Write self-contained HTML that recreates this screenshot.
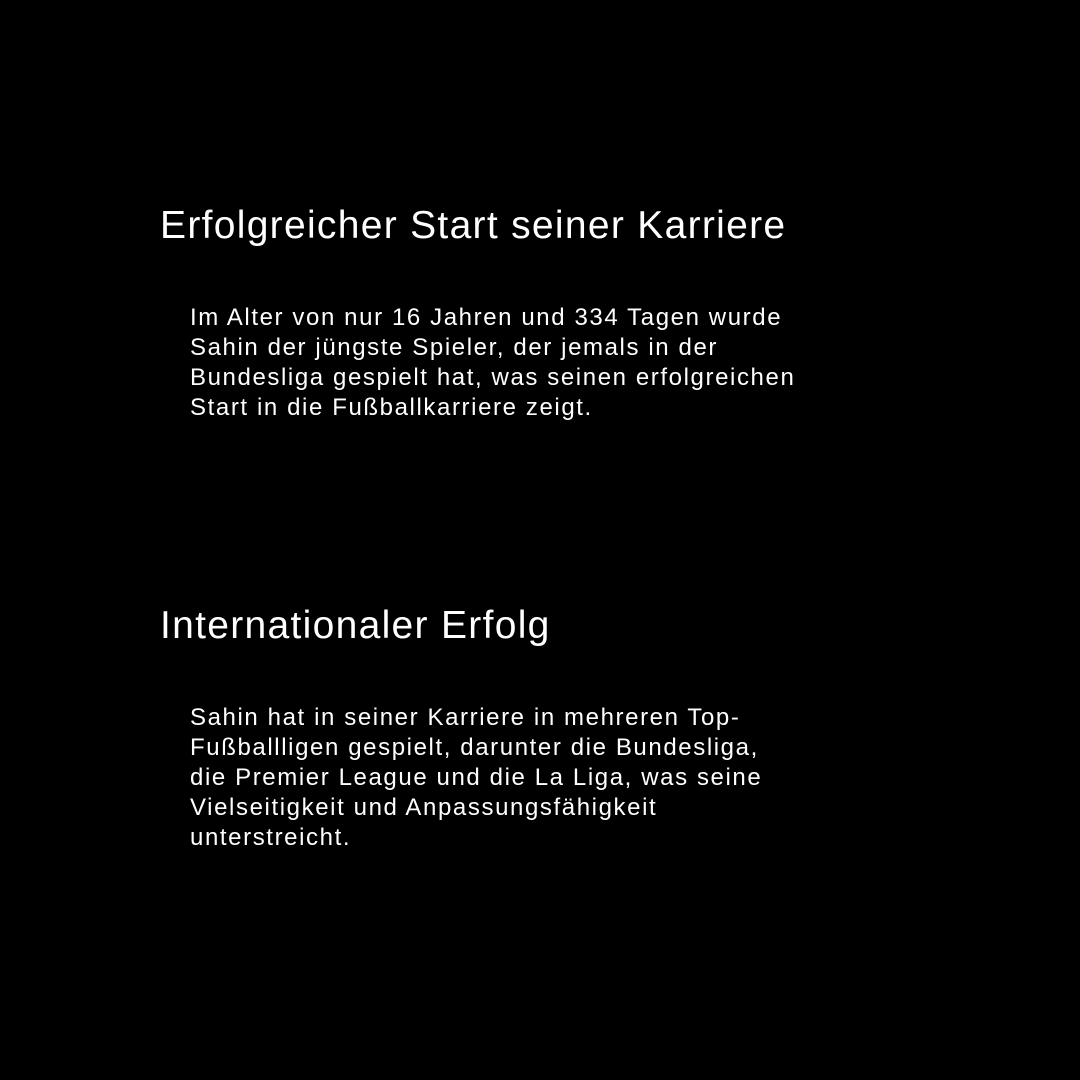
<!DOCTYPE html>
<html><head><meta charset="utf-8"><style>
html,body{margin:0;padding:0;background:#000;}
body{width:1080px;height:1080px;position:relative;overflow:hidden;font-family:"Liberation Sans",sans-serif;color:#fff;}
.h{position:absolute;left:160px;font-size:39px;white-space:nowrap;line-height:46px;letter-spacing:1.3px;}
.p{position:absolute;left:190px;font-size:24px;line-height:30px;white-space:nowrap;letter-spacing:1.6px;}
</style></head><body>
<div class="h" style="top:203px">Erfolgreicher Start seiner Karriere</div>
<div class="p" style="top:303px">Im Alter von nur 16 Jahren und 334 Tagen wurde<br>Sahin der jüngste Spieler, der jemals in der<br>Bundesliga gespielt hat, was seinen erfolgreichen<br>Start in die Fußballkarriere zeigt.</div>
<div class="h" style="top:603px">Internationaler Erfolg</div>
<div class="p" style="top:703px">Sahin hat in seiner Karriere in mehreren Top-<br>Fußballligen gespielt, darunter die Bundesliga,<br>die Premier League und die La Liga, was seine<br>Vielseitigkeit und Anpassungsfähigkeit<br>unterstreicht.</div>
</body></html>
